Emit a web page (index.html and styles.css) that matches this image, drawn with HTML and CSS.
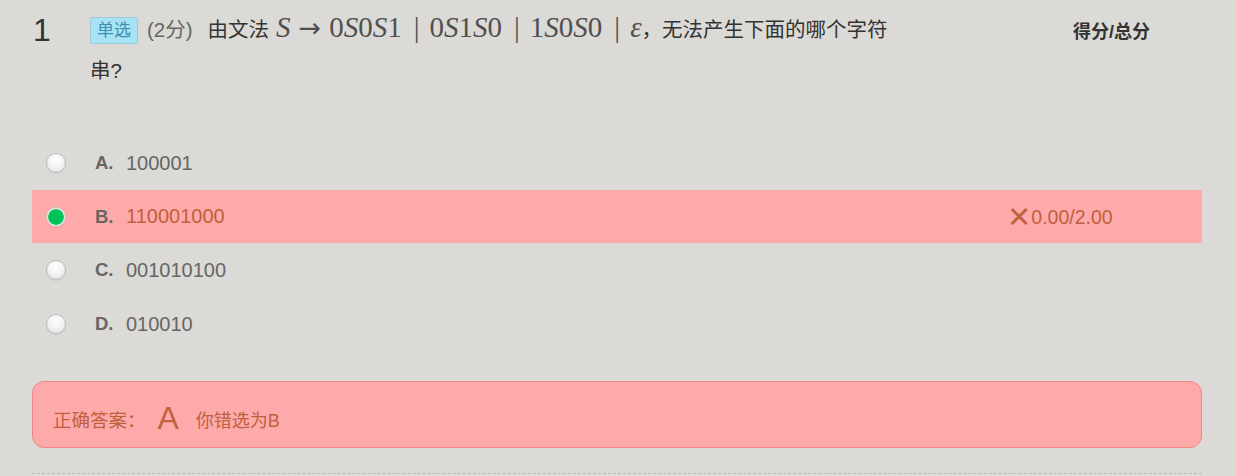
FILE: index.html
```html
<!DOCTYPE html>
<html>
<head>
<meta charset="utf-8">
<link rel="stylesheet" href="styles.css">
</head>
<body>
<div class="question">
  <div class="q-head">
    <div class="q-num">1</div>
    <div class="q-text">
      <span class="tag">单选</span><span class="points">(2分)</span><span>由文法</span><span class="math"><i>S</i><span class="arrow">→</span>0<i>S</i>0<i>S</i>1<span class="bar">|</span>0<i>S</i>1<i>S</i>0<span class="bar">|</span>1<i>S</i>0<i>S</i>0<span class="bar">|</span><i>ε</i></span><span>，无法产生下面的哪个字符</span><span>串?</span>
    </div>
    <div class="q-score">得分/总分</div>
  </div>
  <div class="options">
    <div class="opt"><span class="radio"></span><span class="letter">A.</span><span class="val">100001</span></div>
    <div class="opt wrong"><span class="radio checked"></span><span class="letter">B.</span><span class="val">110001000</span><span class="result"><span class="x">✕</span>0.00/2.00</span></div>
    <div class="opt"><span class="radio"></span><span class="letter">C.</span><span class="val">001010100</span></div>
    <div class="opt"><span class="radio"></span><span class="letter">D.</span><span class="val">010010</span></div>
  </div>
  <div class="answer">
    <span class="a-label">正确答案：</span><span class="a-val">A</span><span class="a-wrong">你错选为B</span>
  </div>
  <div class="divider"></div>
</div>
</body>
</html>
```

FILE: styles.css
```css
html, body {
  margin: 0;
  padding: 0;
  background: #dbdad6;
}
body {
  font-family: "Liberation Sans", "Noto Sans CJK SC", sans-serif;
  color: #333;
  height: 476px;
  overflow: hidden;
}
.question {
  margin-left: 32px;
  width: 1170px;
}
.q-head {
  display: flex;
  align-items: flex-start;
  height: 136px;
}
.q-num {
  width: 58px;
  flex: none;
  font-size: 32px;
  line-height: 32px;
  padding-top: 14px;
  padding-left: 1px;
  box-sizing: border-box;
  color: #333;
}
.q-text {
  width: 805px;
  flex: none;
  font-size: 20.5px;
  line-height: 41px;
  padding-top: 7px;
  color: #333;
}
.tag {
  display: inline-block;
  font-size: 17px;
  line-height: 25px;
  padding: 0 6px;
  background: #a7e3f4;
  border: 1px solid #9ccadb;
  border-radius: 2px;
  color: #3f8eb0;
  vertical-align: 1px;
}
.points {
  color: #666;
  font-size: 20.5px;
  margin: 0 15px 0 9px;
}
.math {
  font-family: "Liberation Serif", "DejaVu Serif", serif;
  font-size: 29px;
  color: #505050;
  margin-left: 7px;
}
.math .arrow {
  font-family: "DejaVu Sans", sans-serif;
  font-size: 27px;
  margin: 0 8px 0 8px;
}
.math .bar {
  margin: 0 10px 0 12px;
}
.q-score {
  flex: 1;
  text-align: right;
  padding-right: 52px;
  font-size: 18px;
  font-weight: bold;
  padding-top: 17px;
  color: #333;
}
.options {
  display: flex;
  flex-direction: column;
}
.opt {
  display: flex;
  align-items: center;
  height: 54px;
  color: #666;
  font-size: 20px;
}
.opt.wrong {
  background: #ffaaaa;
  color: #c0603c;
  height: 53px;
}
.radio {
  width: 18px;
  height: 18px;
  border-radius: 50%;
  border: 1px solid #bdbdbd;
  background: radial-gradient(circle at 50% 35%, #ffffff 0%, #f4f4f4 45%, #dedede 100%);
  margin-left: 14px;
  margin-right: 29px;
  flex: none;
  box-shadow: 0 1px 1px rgba(0,0,0,0.08);
}
.radio.checked {
  background: radial-gradient(circle, #00c25a 0%, #00c25a 58%, #e8e8e8 64%, #f0f0f0 100%);
  border-color: #c8c8c8;
}
.letter {
  font-weight: bold;
  font-size: 18.5px;
  width: 31px;
  color: #666;
}
.val {
  flex: 1;
}
.result {
  width: 195px;
  font-size: 19.5px;
  color: #c0603c;
}
.result .x {
  font-size: 29px;
  vertical-align: -3px;
  font-family: "DejaVu Sans", sans-serif;
  font-weight: bold;
}
.answer {
  margin-top: 30px;
  height: 67px;
  box-sizing: border-box;
  background: #ffaaaa;
  border: 1px solid #f08784;
  border-radius: 12px;
  display: flex;
  align-items: center;
  padding-left: 20px;
  padding-top: 8px;
  color: #c0603c;
}
.a-label {
  font-size: 18.5px;
}
.a-val {
  font-size: 32px;
  margin: 0 17px 0 12px;
}
.a-wrong {
  font-size: 18px;
}
.divider {
  margin-top: 25px;
  border-top: 1px dashed #bbbbb8;
}
```
